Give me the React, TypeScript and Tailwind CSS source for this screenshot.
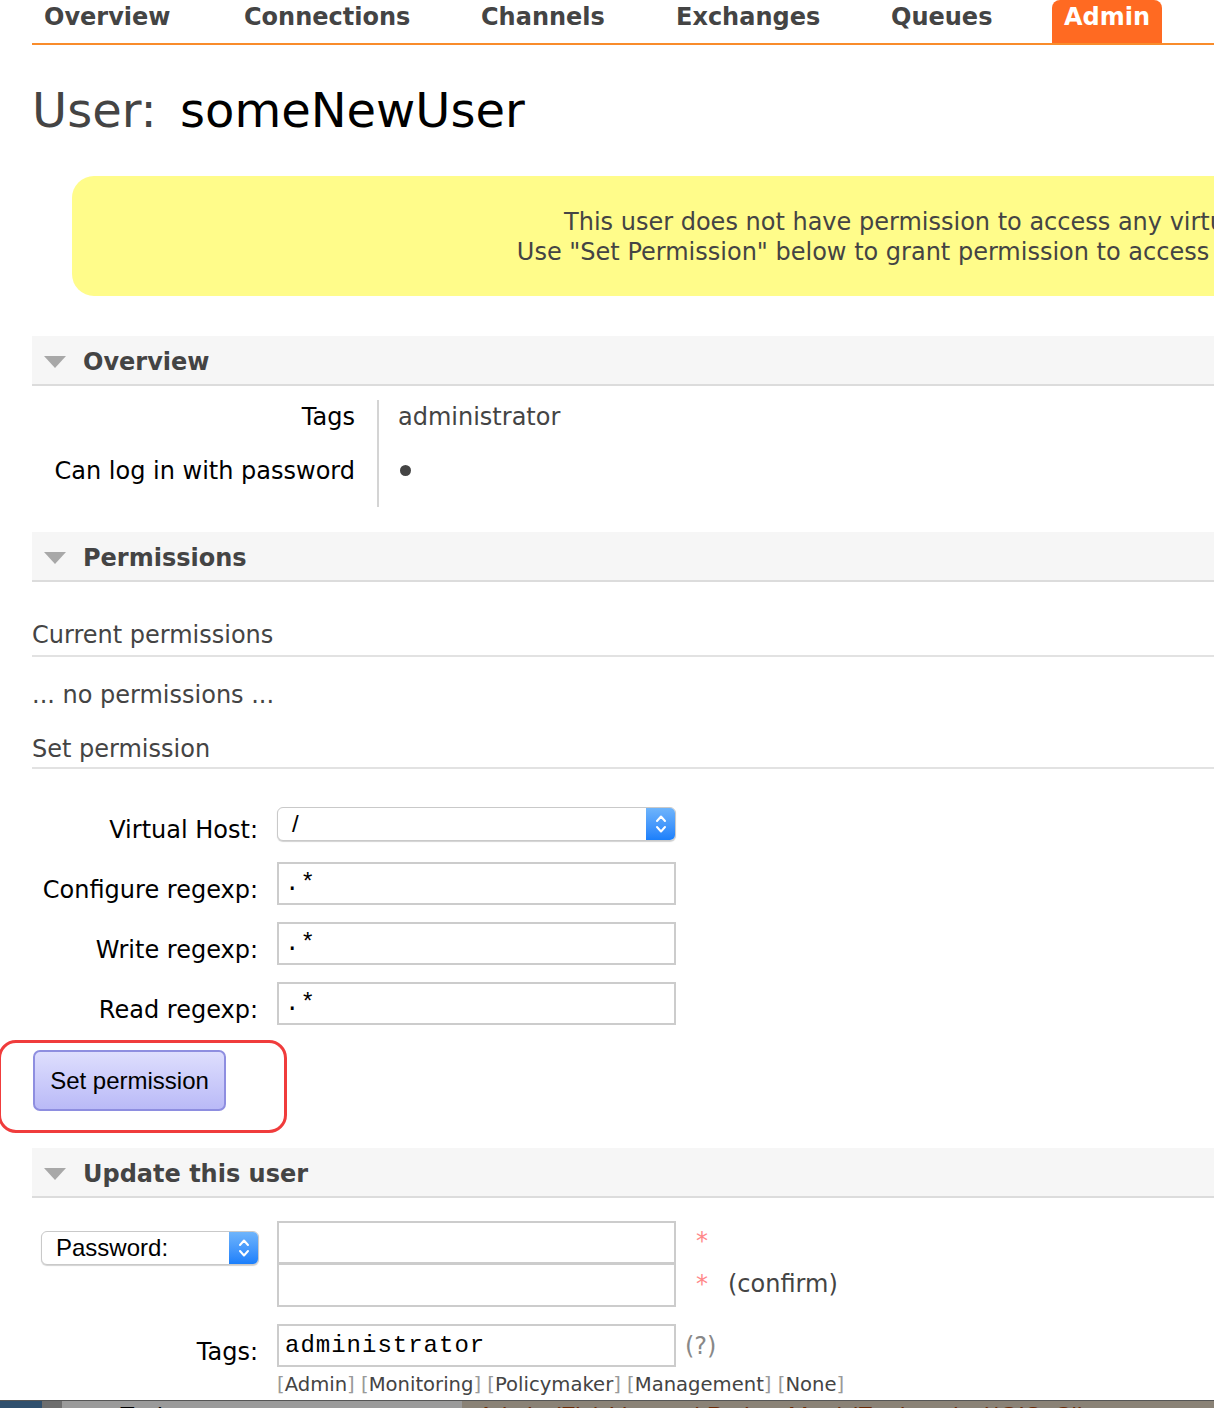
import React from 'react';

const navItems = [
  { label: 'Overview', w: 'w-[200px]' },
  { label: 'Connections', w: 'w-[237px]' },
  { label: 'Channels', w: 'w-[195px]' },
  { label: 'Exchanges', w: 'w-[215px]' },
  { label: 'Queues', w: 'w-[173px]' },
];

function Chevrons() {
  return (
    <svg width="12" height="22" viewBox="0 0 12 22" fill="none" stroke="white" strokeWidth="2" strokeLinecap="round" strokeLinejoin="round">
      <path d="M2 8 L6 3.5 L10 8" />
      <path d="M2 14 L6 18.5 L10 14" />
    </svg>
  );
}

function MacSelect({ value, className }: { value: string; className: string }) {
  return (
    <div className={`flex h-[34px] rounded-[6px] border border-[#c9c9c9] bg-white shadow-[0_1px_1px_rgba(0,0,0,0.18)] overflow-hidden ${className}`}>
      <div className="flex-1 flex items-center pl-[14px] font-['Liberation_Sans',Arial,sans-serif] text-[24px] text-black">{value}</div>
      <div className="w-[29px] flex items-center justify-center bg-gradient-to-b from-[#6eb4fb] to-[#1a7ffb]">
        <Chevrons />
      </div>
    </div>
  );
}

function SectionHeader({ title, className = '' }: { title: string; className?: string }) {
  return (
    <div className={`flex items-center h-[50px] pt-[3px] bg-[#f6f6f6] border-b-2 border-[#dcdcdc] ${className}`}>
      <svg width="22" height="12" viewBox="0 0 22 12" className="ml-[12px] mr-[17px]">
        <polygon points="0,0 22,0 11,12" fill="#a8a8a8" />
      </svg>
      <span className="text-[24px] font-bold text-[#444]">{title}</span>
    </div>
  );
}

function TextInput({ value = '', mono = false, className = '' }: { value?: string; mono?: boolean; className?: string }) {
  return (
    <div className={`w-[399px] h-[43px] border-2 border-[#cccccc] bg-white flex items-center pl-[6px] ${className}`}>
      <span className={mono ? "font-['Liberation_Mono','DejaVu_Sans_Mono',monospace] text-[24px] tracking-[1px] text-black" : 'text-black'}>{value}</span>
    </div>
  );
}

function FormRow({ label, children, className = '', labelPad = 'pt-[14px]' }: { label: string; children: React.ReactNode; className?: string; labelPad?: string }) {
  return (
    <div className={`flex items-start ${className}`}>
      <div className={`w-[226px] text-right text-[24px] text-black leading-[28px] ${labelPad}`}>{label}</div>
      <div className="ml-[19px]">{children}</div>
    </div>
  );
}

export default function App() {
  return (
    <div className="relative w-[1214px] h-[1408px] overflow-hidden bg-white font-['DejaVu_Sans','Verdana',sans-serif] text-[#444]">
      <div className="pl-[32px] w-[1800px]">
        {/* top nav */}
        <ul className="flex h-[45px] border-b-2 border-[#f98c2b]">
          {navItems.map((n) => (
            <li key={n.label} className={`${n.w} px-[12px] text-[24px] font-bold leading-[35px] text-[#444]`}>
              {n.label}
            </li>
          ))}
          <li className="w-[110px] px-[12px] text-[24px] font-bold leading-[35px] text-white bg-[#ff6a22] rounded-t-[8px]">Admin</li>
        </ul>

        <h1 className="mt-[41px] text-[48px] leading-[48px] text-[#444]">
          User: <span className="ml-[8px] text-black">someNewUser</span>
        </h1>

        <div className="mt-[42px] ml-[40px] w-[1746px] h-[120px] rounded-[22px] bg-[#fffc8a] flex flex-col items-center justify-center text-[24px] leading-[30px] text-[#444]">
          <p className="pt-[1px]">This user does not have permission to access any virtual hosts.</p>
          <p>Use "Set Permission" below to grant permission to access virtual hosts.</p>
        </div>

        <div className="w-[1182px]">
          <SectionHeader title="Overview" className="mt-[40px]" />
          <div className="mt-[14px] text-[24px] leading-[28px]">
            <div className="flex h-[54px]">
              <div className="w-[345px] pr-[22px] text-right text-black pt-[3px]">Tags</div>
              <div className="border-l-2 border-[#d4d4d4] pl-[19px] pt-[3px]">administrator</div>
            </div>
            <div className="flex h-[53px]">
              <div className="w-[345px] pr-[22px] text-right text-black pt-[3px]">Can log in with password</div>
              <div className="border-l-2 border-[#d4d4d4] pl-[19px] pt-[3px]">
                <span className="inline-block w-[11px] h-[11px] rounded-full bg-[#444] ml-[2px] mb-[3px]"></span>
              </div>
            </div>
          </div>

          <SectionHeader title="Permissions" className="mt-[25px]" />
          <h3 className="mt-[39px] text-[24px] leading-[28px] pb-[6px] border-b-2 border-[#e2e2e2]">Current permissions</h3>
          <p className="mt-[24px] text-[24px] leading-[28px]">... no permissions ...</p>
          <h3 className="mt-[26px] text-[24px] leading-[28px] pb-[4px] border-b-2 border-[#e2e2e2]">Set permission</h3>

          <FormRow label="Virtual Host:" className="mt-[38px]" labelPad="pt-[9px]">
            <MacSelect value="/" className="w-[399px]" />
          </FormRow>
          <FormRow label="Configure regexp:" className="mt-[18px]">
            <TextInput value=".*" mono />
          </FormRow>
          <FormRow label="Write regexp:" className="mt-[17px]">
            <TextInput value=".*" mono />
          </FormRow>
          <FormRow label="Read regexp:" className="mt-[17px]">
            <TextInput value=".*" mono />
          </FormRow>

          <button className="mt-[25px] ml-[1px] w-[193px] h-[61px] rounded-[7px] border-2 border-[#8e8ee0] bg-gradient-to-b from-[#dedefd] to-[#babaf7] font-['Liberation_Sans',Arial,sans-serif] text-[24px] text-black">
            Set permission
          </button>

          <SectionHeader title="Update this user" className="mt-[37px]" />

          <div className="mt-[23px] flex">
            <div className="w-[227px] flex justify-end pt-[10px]">
              <MacSelect value="Password:" className="w-[218px]" />
            </div>
            <div className="ml-[18px] flex flex-col">
              <TextInput />
              <TextInput className="-mt-[1px] h-[44px]" />
            </div>
            <div className="ml-[20px] flex flex-col text-[24px]">
              <div className="h-[40px] flex items-center text-[#f88]">*</div>
              <div className="h-[46px] flex items-center">
                <span className="text-[#f88]">*</span>
                <span className="ml-[20px] text-[#444]">(confirm)</span>
              </div>
            </div>
          </div>

          <FormRow label="Tags:" className="mt-[17px]" labelPad="pt-[14px]">
            <div className="flex items-center">
              <TextInput value="administrator" mono />
              <span className="ml-[9px] text-[24px] text-[#888]">(?)</span>
            </div>
          </FormRow>
          <p className="ml-[245px] mt-[6px] text-[19.6px] leading-[24px] text-[#444]">
            <span className="text-[#999]">[</span>Admin<span className="text-[#999]">]</span>{' '}
            <span className="text-[#999]">[</span>Monitoring<span className="text-[#999]">]</span>{' '}
            <span className="text-[#999]">[</span>Policymaker<span className="text-[#999]">]</span>{' '}
            <span className="text-[#999]">[</span>Management<span className="text-[#999]">]</span>{' '}
            <span className="text-[#999]">[</span>None<span className="text-[#999]">]</span>
          </p>
        </div>
      </div>

      {/* annotation around the button */}
      <div className="absolute left-[-2px] top-[1040px] w-[289px] h-[93px] rounded-[18px] border-[3px] border-[#f03c3c]"></div>

      {/* another window peeking in at the bottom */}
      <div className="absolute left-0 bottom-0 w-full h-[8px] flex bg-[#8c8c8c] border-t border-[#555] overflow-hidden">
        <div className="w-[42px] bg-[#2f4f6d]"></div>
        <div className="w-[20px] bg-[#6d6d6d]"></div>
        <div className="w-[400px] bg-[#9a9a9a] pl-[58px] text-[24px] leading-[30px] text-black font-['Liberation_Sans',Arial,sans-serif]">Tasks</div>
        <div className="flex-1 bg-[#8a8276] pl-[16px] text-[24px] leading-[30px] text-[#6b2a05] font-['Liberation_Sans',Arial,sans-serif] whitespace-nowrap">
          Ariotin (Fin) Limono | Project Mgr | (Engineering)|GIS, Client
        </div>
      </div>
    </div>
  );
}
